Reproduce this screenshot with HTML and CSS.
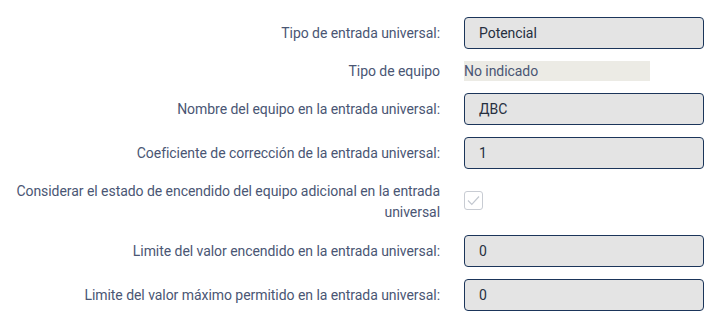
FILE: index.html
```html
<!DOCTYPE html>
<html lang="es">
<head>
<meta charset="utf-8">
<link rel="stylesheet" href="styles.css">
</head>
<body>
<div class="form">
  <div class="label">Tipo de entrada universal:</div>
  <div class="field"><div class="input">Potencial</div></div>

  <div class="label">Tipo de equipo</div>
  <div class="field"><div class="static">No indicado</div></div>

  <div class="label">Nombre del equipo en la entrada universal:</div>
  <div class="field"><div class="input">ДВС</div></div>

  <div class="label">Coeficiente de corrección de la entrada universal:</div>
  <div class="field"><div class="input">1</div></div>

  <div class="label two">Considerar el estado de encendido del equipo adicional en la entrada universal</div>
  <div class="field">
    <span class="check"><svg width="13" height="11" viewBox="0 0 13 11"><path d="M1 5.5 L4.8 9.3 L12 1.5" fill="none" stroke="#c3c8d0" stroke-width="1.2"/></svg></span>
  </div>

  <div class="label">Limite del valor encendido en la entrada universal:</div>
  <div class="field"><div class="input">0</div></div>

  <div class="label">Limite del valor máximo permitido en la entrada universal:</div>
  <div class="field"><div class="input">0</div></div>
</div>
</body>
</html>
```

FILE: styles.css
```css
html, body {
  margin: 0;
  padding: 0;
  background: #ffffff;
}
body {
  font-family: Roboto, "Liberation Sans", sans-serif;
  font-size: 14px;
  letter-spacing: -0.05px;
}
.form {
  display: grid;
  grid-template-columns: 440px 240px;
  column-gap: 24px;
  row-gap: 12px;
  padding-top: 17px;
  align-items: center;
}
.label {
  text-align: right;
  color: #4a5674;
  line-height: 20px;
}
.two {
  line-height: 21px;
}
.field {
  display: flex;
  align-items: center;
}
.input {
  box-sizing: border-box;
  width: 240px;
  height: 32px;
  background: #e4e4e4;
  border: 1px solid #1b355a;
  border-radius: 4px;
  padding: 0 14px;
  display: flex;
  align-items: center;
  color: #262f3f;
}
.static {
  box-sizing: border-box;
  width: 186px;
  height: 20px;
  background: #ecebe5;
  color: #4a5674;
  display: flex;
  align-items: center;
  line-height: 20px;
}
.check {
  box-sizing: border-box;
  width: 19px;
  height: 19px;
  margin-top: -3px;
  border: 1px solid #c8ccd3;
  border-radius: 3px;
  display: flex;
  align-items: center;
  justify-content: center;
  background: #fff;
}
```
